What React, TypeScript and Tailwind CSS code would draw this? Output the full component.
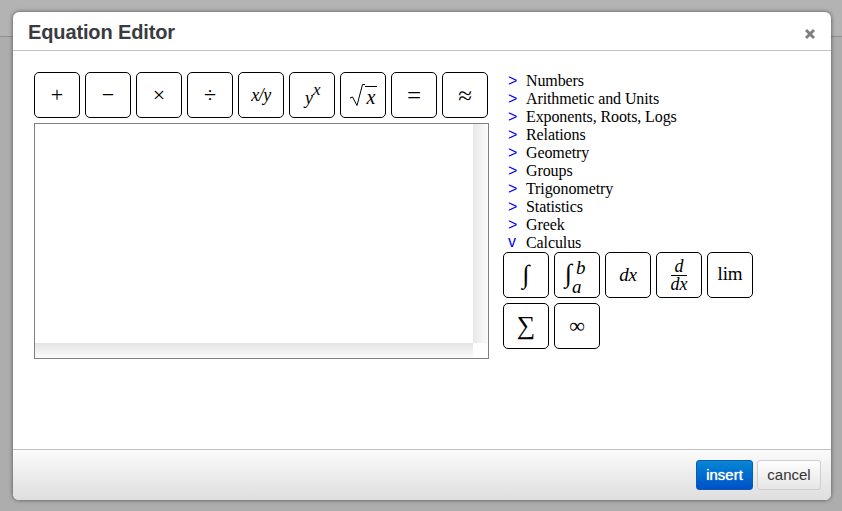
const serif = 'font-["Liberation_Serif",serif]'

function MathBtn({ children }: { children: React.ReactNode }) {
  return (
    <button className={`flex h-[46px] w-[46px] items-center justify-center rounded-[5px] border border-black bg-white text-black ${serif}`}>
      {children}
    </button>
  )
}

const topButtons = [
  <span className="text-[22px] font-light leading-none">+</span>,
  <span className="text-[22px] leading-none">−</span>,
  <span className="text-[22px] leading-none">×</span>,
  <span className="text-[22px] leading-none">÷</span>,
  <span className="text-[18px] italic tracking-[-0.5px]">x/y</span>,
  <span className="relative mt-[5px] text-[18px] italic leading-none">
    y<sup className="absolute -top-[8px] left-[8px] text-[17px] leading-none">x</sup>
    <span className="invisible text-[13px]">x</span>
  </span>,
  <span className="flex items-end">
    <svg width="16" height="23" viewBox="0 0 16 23" fill="none" stroke="#000">
      <path d="M1 14l2.500-1 4.500 8.500 5.500-21h2.500" strokeWidth="1" />
    </svg>
    <span className="border-t border-black px-[2px] text-[20px] italic leading-[20px]">x</span>
  </span>,
  <span className="text-[25px] leading-none">=</span>,
  <span className="text-[25px] leading-none">≈</span>,
]

const categories = [
  'Numbers',
  'Arithmetic and Units',
  'Exponents, Roots, Logs',
  'Relations',
  'Geometry',
  'Groups',
  'Trigonometry',
  'Statistics',
  'Greek',
]

const calculusButtons = [
  <span className="text-[26px] italic leading-none">∫</span>,
  <span className="relative h-[38px] w-[28px] italic">
    <span className="absolute left-[2px] top-[5px] text-[26px] leading-none">∫</span>
    <span className="absolute left-[13px] top-[2px] text-[19px] leading-none">b</span>
    <span className="absolute left-[9px] top-[21px] text-[19px] leading-none">a</span>
  </span>,
  <span className="text-[19px] italic">dx</span>,
  <span className="flex flex-col items-center text-[18px] italic leading-[17px]">
    <span className="w-full border-b border-black px-[1px] text-center">d</span>
    <span>dx</span>
  </span>,
  <span className="mb-[2px] text-[19px]">lim</span>,
  <span className="text-[26px] leading-none">∑</span>,
  <span className="text-[22px] leading-none">∞</span>,
]

export default function App() {
  return (
    <div className="relative h-[511px] w-[842px] overflow-hidden bg-[#adadad] font-['Liberation_Sans',sans-serif]">
      <div className="h-[37px] border-b border-[#8f8f8f] bg-[#b3b3b3]" />
      <div className="absolute left-[13px] top-[12px] flex h-[488px] w-[818px] flex-col overflow-hidden rounded-[6px] bg-white shadow-[0_0_4px_rgba(0,0,0,0.55)]">
        <div className="flex h-[39px] shrink-0 items-center justify-between border-b border-[#c4c4c4] pl-[15px] pr-[15px]">
          <h3 className="mt-[2px] text-[20px] font-bold leading-none tracking-[-0.13px] text-[#393b40]">Equation Editor</h3>
          <svg width="12" height="12" viewBox="0 0 12 12" className="mt-[5px]">
            <path d="M2 2l8 8M10 2l-8 8" stroke="#808080" strokeWidth="3" />
          </svg>
        </div>

        <div className="flex min-h-0 flex-1 pl-[21px] pt-[21px]">
          <div className="w-[455px] shrink-0">
            <div className="flex gap-[5px]">
              {topButtons.map((b, i) => (
                <MathBtn key={i}>{b}</MathBtn>
              ))}
            </div>
            <div className="mt-[5px] flex h-[236px] flex-col border border-[#808080] bg-white">
              <div className="flex min-h-0 flex-1">
                <div className="flex-1" />
                <div className="w-[15px] bg-gradient-to-r from-[#e8e8e8] to-[#fbfbfb]" />
              </div>
              <div className="flex h-[15px] shrink-0">
                <div className="flex-1 bg-gradient-to-b from-[#e4e4e4] to-[#fcfcfc]" />
                <div className="w-[15px] bg-white" />
              </div>
            </div>
          </div>

          <div className={`ml-[14px] w-[255px] text-[16px] leading-[18px] tracking-[-0.1px] text-black ${serif}`}>
            <ul>
              {categories.map((c) => (
                <li key={c} className="flex">
                  <span className="w-[23px] pl-[5px] font-['Liberation_Sans',sans-serif] text-[16px] text-[#0000ff]">&gt;</span>
                  <span>{c}</span>
                </li>
              ))}
              <li className="flex">
                <span className="w-[23px] pl-[5px] font-['Liberation_Sans',sans-serif] text-[16px] font-light leading-[15px] text-[#0000ff]">v</span>
                <span>Calculus</span>
              </li>
            </ul>
            <div className="flex flex-wrap gap-[5px]">
              {calculusButtons.map((b, i) => (
                <MathBtn key={i}>{b}</MathBtn>
              ))}
            </div>
          </div>
        </div>

        <div className="flex h-[51px] shrink-0 items-center justify-end gap-[4px] border-t border-[#c4c4c4] bg-gradient-to-b from-[#fbfbfb] to-[#dedede] pr-[10px]">
          <button className="h-[30px] w-[57px] rounded-[3px] border border-[#0a5cb0] bg-gradient-to-b from-[#0a86d4] to-[#0050c8] text-[15px] text-white [text-shadow:0_0_1px_#fff]">
            insert
          </button>
          <button className="h-[30px] w-[64px] rounded-[3px] border border-[#cfcfcf] bg-gradient-to-b from-[#fefefe] to-[#e6e6e6] text-[15px] text-[#333]">
            cancel
          </button>
        </div>
      </div>
    </div>
  )
}
